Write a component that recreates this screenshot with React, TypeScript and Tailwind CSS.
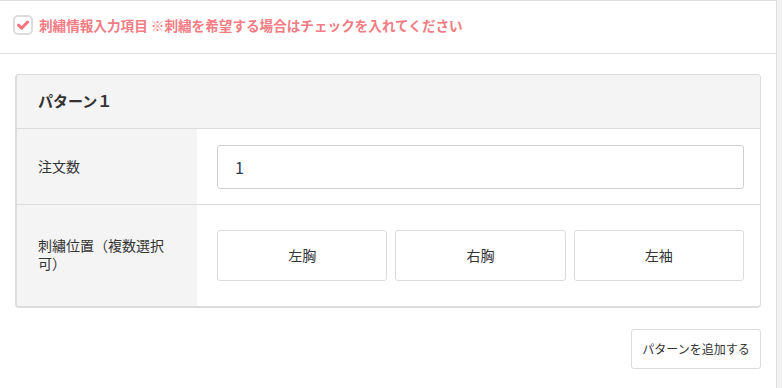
const font = { fontFamily: '"Noto Sans CJK JP", "Noto Sans", sans-serif' };

function CheckIcon() {
  return (
    <svg viewBox="0 0 20 20" className="w-[20px] h-[20px]">
      <rect x="1" y="1" width="18" height="18" rx="4" fill="#fff" stroke="#dcdcdc" strokeWidth="2" />
      <path d="M5.5 10.2 L8.7 13.2 L14.6 7" fill="none" stroke="#f3747e" strokeWidth="3" strokeLinecap="round" strokeLinejoin="round" />
    </svg>
  );
}

export default function App() {
  const positions = ["左胸", "右胸", "左袖"];
  return (
    <div className="w-[782px] h-[388px] bg-white flex overflow-hidden" style={font}>
      <div className="w-[777px] border-t border-r border-[#dedede] flex flex-col">
        {/* Header */}
        <div className="h-[53px] border-b border-[#dedede] flex items-center pl-[13px] pb-[4px] gap-[6px]">
          <CheckIcon />
          <span className="text-[13.6px] font-bold text-[#f37b83]">
            刺繡情報入力項目 ※刺繡を希望する場合はチェックを入れてください
          </span>
        </div>

        {/* Pattern card */}
        <div className="mt-[20px] ml-[15px] w-[746px] border border-[#dcdcdc] border-l-2 border-b-2 rounded-[4px] overflow-hidden">
          <div className="h-[54px] bg-[#f4f4f4] border-b border-[#dcdcdc] flex items-center pl-[21px] text-[15px] font-bold text-[#333]">
            パターン１
          </div>
          <div className="flex h-[76px] border-b border-[#dcdcdc]">
            <div className="w-[180px] bg-[#f4f4f4] flex items-center pl-[21px] text-[14px] text-[#333]">注文数</div>
            <div className="flex-1 flex items-center pl-[20px] pr-[16px]">
              <div className="w-full h-[44px] border border-[#cfcfcf] rounded-[3px] flex items-center pl-[17px] text-[16px] text-[#1f3b5a]">
                1
              </div>
            </div>
          </div>
          <div className="flex h-[101px]">
            <div className="w-[180px] bg-[#f4f4f4] flex items-center pl-[21px] pr-[20px] pb-[4px] text-[14px] leading-[18px] text-[#333]">
              刺繡位置（複数選択可）
            </div>
            <div className="flex-1 flex items-center gap-[8px] pl-[20px] pr-[16px]">
              {positions.map((p) => (
                <div
                  key={p}
                  className="flex-1 h-[51px] border border-[#dcdcdc] rounded-[3px] flex items-center justify-center text-[14px] text-[#333]"
                >
                  {p}
                </div>
              ))}
            </div>
          </div>
        </div>

        <div className="flex justify-end pr-[15px] mt-[21px]">
          <div className="w-[130px] h-[40px] border border-[#dcdcdc] rounded-[3px] flex items-center justify-center text-[12px] text-[#333]">
            パターンを追加する
          </div>
        </div>
      </div>
      <div className="flex-1 bg-[#f1f1f1]" />
    </div>
  );
}
